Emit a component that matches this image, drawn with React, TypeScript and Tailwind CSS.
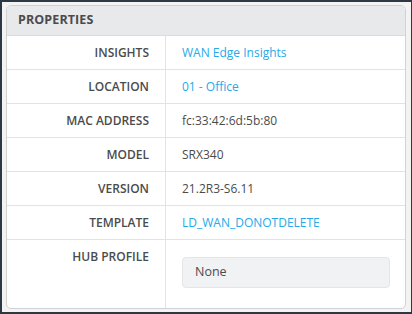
const rows: { label: string; value: string; link?: boolean }[] = [
  { label: "Insights", value: "WAN Edge Insights", link: true },
  { label: "Location", value: "01 - Office", link: true },
  { label: "MAC Address", value: "fc:33:42:6d:5b:80" },
  { label: "Model", value: "SRX340" },
  { label: "Version", value: "21.2R3-S6.11" },
  { label: "Template", value: "LD_WAN_DONOTDELETE", link: true },
];

export default function App() {
  return (
    <div
      className="w-[412px] h-[314px] bg-[#2c3945] pl-[2px] pt-[2px] pr-[1px] pb-[2px]"
      style={{ fontFamily: '"Open Sans", "Noto Sans", sans-serif' }}
    >
      <div className="h-full bg-[#f3f3f3] pl-[4px] pt-[3px] pr-[5px] pb-[3px]">
        <div className="h-[304px] bg-white border border-[#d2d2d2] rounded-[5px] overflow-hidden flex flex-col">
          <div className="h-[30px] shrink-0 bg-[#e8e9eb] border-b border-[#dcdcdc] flex items-center pl-[11px] text-[12.5px] font-bold text-[#4b4b4b] tracking-[0.1px]">
            PROPERTIES
          </div>
          {rows.map((r) => (
            <div key={r.label} className="h-[34px] shrink-0 flex border-b border-[#e3e3e3] text-[12px]">
              <div className="w-[159px] shrink-0 border-r border-[#e3e3e3] flex items-center justify-end pr-[16px] font-semibold uppercase text-[#4b4b4b]">
                {r.label}
              </div>
              <div
                className={
                  r.link
                    ? "flex items-center pl-[16px] text-[#26a9e8]"
                    : "flex items-center pl-[16px] text-[#4b4b4b]"
                }
              >
                {r.value}
              </div>
            </div>
          ))}
          <div className="flex-1 flex text-[12px]">
            <div className="w-[159px] shrink-0 border-r border-[#e3e3e3] flex justify-end pr-[16px] pt-[8px] font-semibold uppercase text-[#4b4b4b]">
              Hub Profile
            </div>
            <div className="flex-1 pl-[16px] pr-[15px] pt-[17px]">
              <div className="h-[31px] bg-[#f1f2f3] border border-[#e4e5e6] rounded-[4px] flex items-center pl-[12px] text-[12.5px] text-[#4b4b4b]">
                None
              </div>
            </div>
          </div>
        </div>
      </div>
    </div>
  );
}
